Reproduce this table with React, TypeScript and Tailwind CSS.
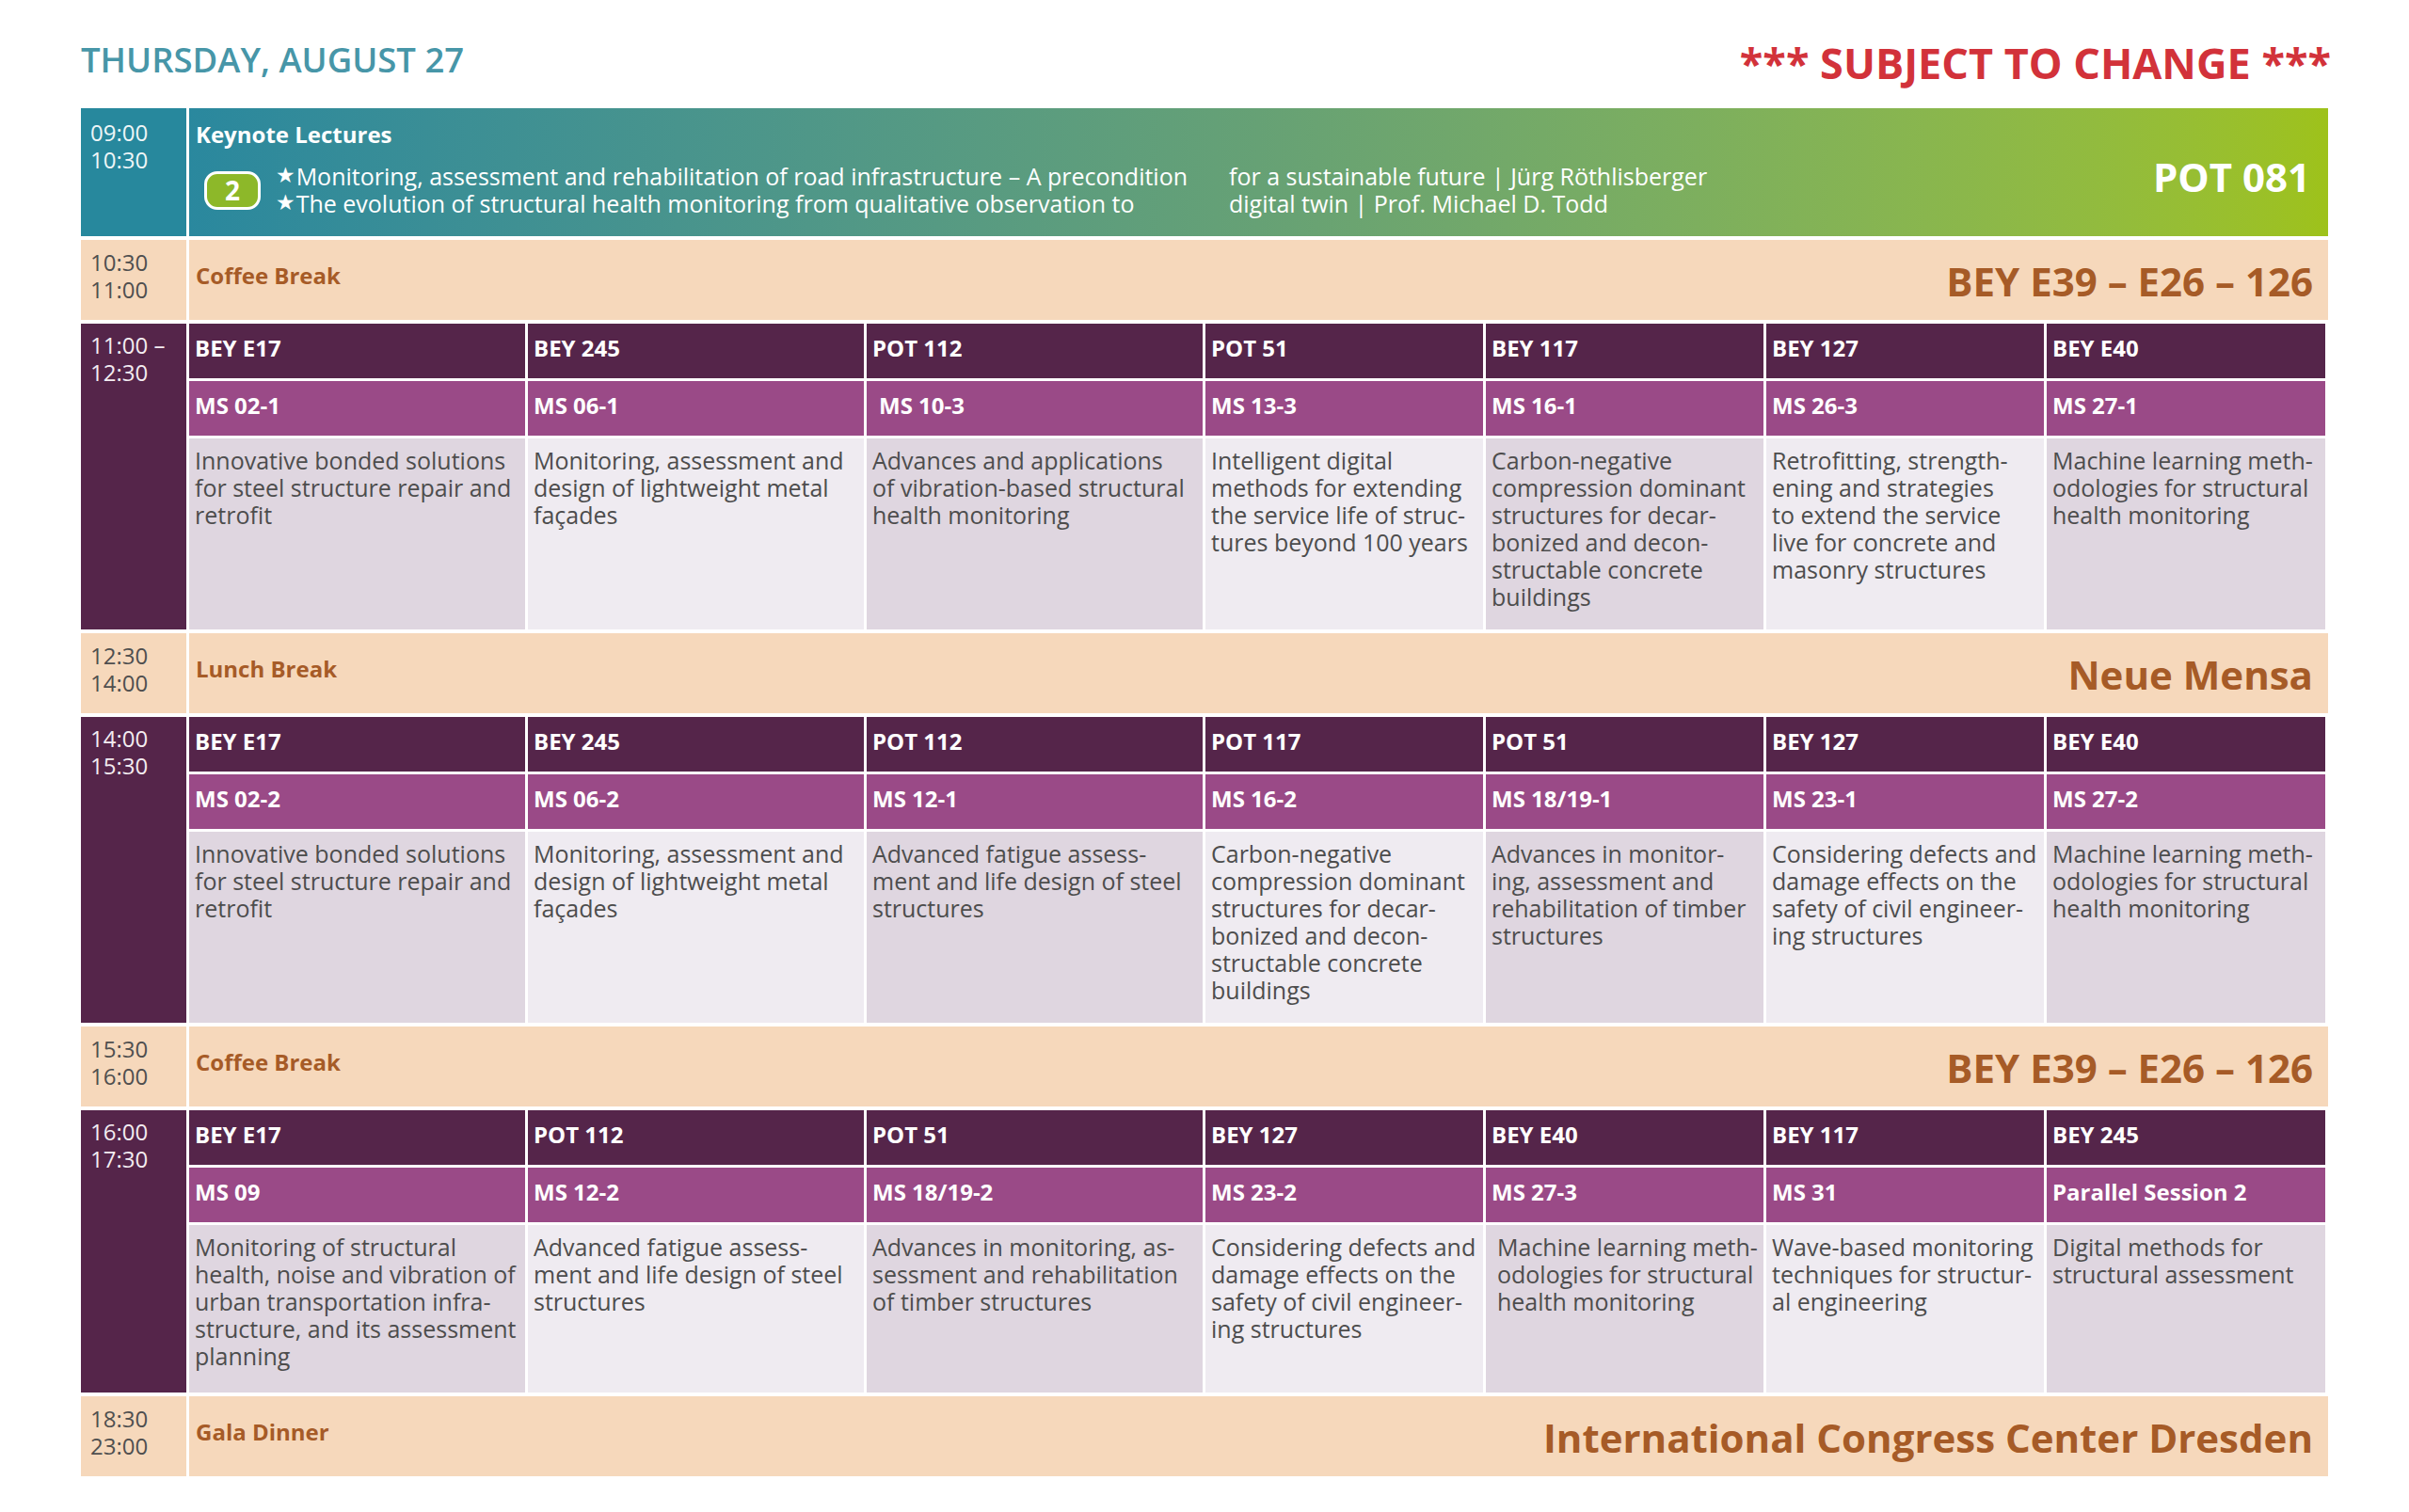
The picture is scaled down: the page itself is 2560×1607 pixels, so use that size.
import React from 'react';

interface Session {
  room: string;
  ms: string;
  lines: string[];
  indent?: boolean;
  indentText?: boolean;
}

interface Block {
  time: string[];
  contentH: string;
  sessions: Session[];
}

const MS02 = ['Innovative bonded solutions', 'for steel structure repair and', 'retrofit'];
const MS06 = ['Monitoring, assessment and', 'design of lightweight metal', 'façades'];
const CARBON = [
  'Carbon-negative',
  'compression dominant',
  'structures for decar-',
  'bonized and decon-',
  'structable concrete',
  'buildings',
];
const MACHINE = ['Machine learning meth-', 'odologies for structural', 'health monitoring'];
const FATIGUE = ['Advanced fatigue assess-', 'ment and life design of steel', 'structures'];
const DEFECTS = ['Considering defects and', 'damage effects on the', 'safety of civil engineer-', 'ing structures'];

const blocks: Block[] = [
  {
    time: ['11:00 –', '12:30'],
    contentH: 'h-[203px]',
    sessions: [
      { room: 'BEY E17', ms: 'MS 02-1', lines: MS02 },
      { room: 'BEY 245', ms: 'MS 06-1', lines: MS06 },
      {
        room: 'POT 112',
        ms: 'MS 10-3',
        indent: true,
        lines: ['Advances and applications', 'of vibration-based structural', 'health monitoring'],
      },
      {
        room: 'POT 51',
        ms: 'MS 13-3',
        lines: ['Intelligent digital', 'methods for extending', 'the service life of struc-', 'tures beyond 100 years'],
      },
      { room: 'BEY 117', ms: 'MS 16-1', lines: CARBON },
      {
        room: 'BEY 127',
        ms: 'MS 26-3',
        lines: [
          'Retrofitting, strength-',
          'ening and strategies',
          'to extend the service',
          'live for concrete and',
          'masonry structures',
        ],
      },
      { room: 'BEY E40', ms: 'MS 27-1', lines: MACHINE },
    ],
  },
  {
    time: ['14:00', '15:30'],
    contentH: 'h-[203px]',
    sessions: [
      { room: 'BEY E17', ms: 'MS 02-2', lines: MS02 },
      { room: 'BEY 245', ms: 'MS 06-2', lines: MS06 },
      { room: 'POT 112', ms: 'MS 12-1', lines: FATIGUE },
      { room: 'POT 117', ms: 'MS 16-2', lines: CARBON },
      {
        room: 'POT 51',
        ms: 'MS 18/19-1',
        lines: ['Advances in monitor-', 'ing, assessment and', 'rehabilitation of timber', 'structures'],
      },
      { room: 'BEY 127', ms: 'MS 23-1', lines: DEFECTS },
      { room: 'BEY E40', ms: 'MS 27-2', lines: MACHINE },
    ],
  },
  {
    time: ['16:00', '17:30'],
    contentH: 'h-[178px]',
    sessions: [
      {
        room: 'BEY E17',
        ms: 'MS 09',
        lines: [
          'Monitoring of structural',
          'health, noise and vibration of',
          'urban transportation infra-',
          'structure, and its assessment',
          'planning',
        ],
      },
      { room: 'POT 112', ms: 'MS 12-2', lines: FATIGUE },
      {
        room: 'POT 51',
        ms: 'MS 18/19-2',
        lines: ['Advances in monitoring, as-', 'sessment and rehabilitation', 'of timber structures'],
      },
      { room: 'BEY 127', ms: 'MS 23-2', lines: DEFECTS },
      { room: 'BEY E40', ms: 'MS 27-3', lines: MACHINE, indentText: true },
      {
        room: 'BEY 117',
        ms: 'MS 31',
        lines: ['Wave-based monitoring', 'techniques for structur-', 'al engineering'],
      },
      { room: 'BEY 245', ms: 'Parallel Session 2', lines: ['Digital methods for', 'structural assessment'] },
    ],
  },
];

const GRID = 'grid grid-cols-[357px_357px_357px_295px_295px_295px_296px] gap-x-[3px]';

function TimeCell({ lines, className }: { lines: string[]; className: string }) {
  return (
    <div className={`w-[112px] shrink-0 pl-[10px] text-[24px] leading-[29px] ${className}`}>
      {lines.map((l) => (
        <div key={l} className="whitespace-nowrap">
          {l}
        </div>
      ))}
    </div>
  );
}

function BreakRow({ time, label, place }: { time: string[]; label: string; place: string }) {
  return (
    <div className="flex h-[85px] gap-[3px]">
      <TimeCell lines={time} className="bg-[#f6d8bb] pt-[9px] text-[#4f4f4f]" />
      <div className="flex flex-1 items-center justify-between bg-[#f6d8bb] pr-[16px] pl-[7px] text-[#a65b27]">
        <span className="mb-[10px] text-[24px] leading-[29px] font-bold">{label}</span>
        <span className="mt-[3px] text-[42px] leading-[42px] font-bold">{place}</span>
      </div>
    </div>
  );
}

function SessionBlock({ block }: { block: Block }) {
  return (
    <div className="flex gap-[3px]">
      <TimeCell lines={block.time} className="bg-[#55254a] pt-[8px] text-[#f3ecf1]" />
      <div className="flex flex-1 flex-col gap-y-[3px]">
        <div className={GRID}>
          {block.sessions.map((s, i) => (
            <div
              key={i}
              className="flex h-[58px] items-center bg-[#55254a] pb-[7px] pl-[6px] text-[24px] leading-[29px] font-bold text-white"
            >
              {s.room}
            </div>
          ))}
        </div>
        <div className={GRID}>
          {block.sessions.map((s, i) => (
            <div
              key={i}
              className={`flex h-[58px] items-center bg-[#9a4a87] pb-[7px] text-[24px] leading-[29px] font-bold text-white ${
                s.indent ? 'pl-[13px]' : 'pl-[6px]'
              }`}
            >
              {s.ms}
            </div>
          ))}
        </div>
        <div className={GRID}>
          {block.sessions.map((s, i) => (
            <div
              key={i}
              className={`${block.contentH} pt-[9px] text-[25px] leading-[29px] text-[#4d4d4d] ${
                i % 2 === 0 ? 'bg-[#dfd6e0]' : 'bg-[#efebf1]'
              } ${s.indentText ? 'pl-[12px]' : 'pl-[6px]'}`}
            >
              {s.lines.map((l, j) => (
                <div key={j} className="whitespace-nowrap">
                  {l}
                </div>
              ))}
            </div>
          ))}
        </div>
      </div>
    </div>
  );
}

function KeynoteRow() {
  const talks = [
    ['Monitoring, assessment and rehabilitation of road infrastructure – A precondition', 'for a sustainable future | Jürg Röthlisberger'],
    ['The evolution of structural health monitoring from qualitative observation to', 'digital twin | Prof. Michael D. Todd'],
  ];
  return (
    <div className="flex h-[136px] gap-[3px]">
      <TimeCell lines={['09:00', '10:30']} className="bg-[#27889d] pt-[11px] text-[#eef6f8]" />
      <div className="flex flex-1 justify-between bg-linear-to-r from-[#2a889e] via-[#66a175] to-[#9ec21a] pr-[19px] pl-[7px] text-white">
        <div className="pt-[13px]">
          <div className="text-[24px] leading-[29px] font-bold">Keynote Lectures</div>
          <div className="mt-[16px] flex items-center">
            <div className="ml-[9px] flex h-[41px] w-[60px] items-center justify-center rounded-[14px] border-[3px] border-white bg-[#8db829] text-[28px] leading-none font-bold">
              2
            </div>
            <div className="ml-[16px] grid grid-cols-[1013px_auto] text-[25px] leading-[29px]">
              {talks.map(([a, b]) => (
                <React.Fragment key={a}>
                  <div className="flex h-[29px] items-center whitespace-nowrap">
                    <span className="mr-[1px] -mt-[2px] font-['DejaVu_Sans',sans-serif] text-[23px] leading-none">★</span>
                    {a}
                  </div>
                  <div className="whitespace-nowrap">{b}</div>
                </React.Fragment>
              ))}
            </div>
          </div>
        </div>
        <div className="mt-[10px] self-center text-[42px] leading-[42px] font-bold">POT 081</div>
      </div>
    </div>
  );
}

export default function App() {
  return (
    <div className="min-h-screen bg-white font-['Open_Sans','Noto_Sans',sans-serif]">
      <div className="px-[86px] pt-[44px] pb-[38px]">
        <header className="flex h-[71px] items-start justify-between">
          <h1 className="mt-[1px] text-[36.5px] leading-[37px] font-semibold text-[#4796a8]">THURSDAY, AUGUST 27</h1>
          <div className="-mr-[3px] text-[45px] leading-[45px] font-bold text-[#d2323a]">*** SUBJECT TO CHANGE ***</div>
        </header>
        <div className="flex flex-col gap-[4px]">
          <KeynoteRow />
          <BreakRow time={['10:30', '11:00']} label="Coffee Break" place="BEY E39 – E26 – 126" />
          <SessionBlock block={blocks[0]} />
          <BreakRow time={['12:30', '14:00']} label="Lunch Break" place="Neue Mensa" />
          <SessionBlock block={blocks[1]} />
          <BreakRow time={['15:30', '16:00']} label="Coffee Break" place="BEY E39 – E26 – 126" />
          <SessionBlock block={blocks[2]} />
          <BreakRow time={['18:30', '23:00']} label="Gala Dinner" place="International Congress Center Dresden" />
        </div>
      </div>
    </div>
  );
}
